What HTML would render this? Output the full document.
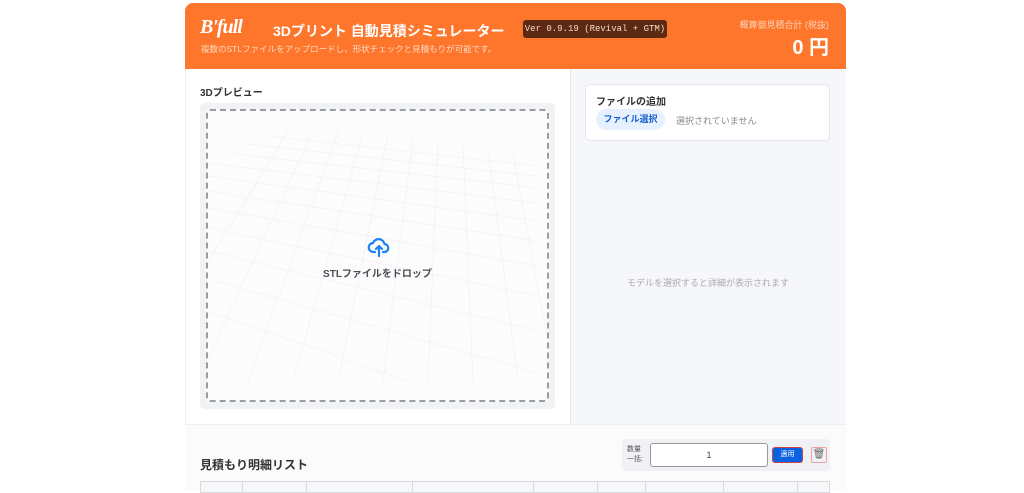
<!DOCTYPE html>
<html><head><meta charset="utf-8"><style>
*{margin:0;padding:0;box-sizing:border-box}
body{width:1024px;height:490px;background:#fff;font-family:"Liberation Sans","Noto Sans CJK JP",sans-serif;position:relative;overflow:hidden}
.hdr{position:absolute;left:185px;top:3px;width:661px;height:66px;background:#fe762c;border-radius:8px 8px 0 0;color:#fff}
.abs{position:absolute;white-space:nowrap}
</style></head><body>
<div class="hdr">
  <div class="abs" style="left:15px;top:13px;font-size:20px;font-weight:bold;font-style:italic;font-family:'Liberation Serif',serif;letter-spacing:-1px">B'full</div>
  <div class="abs" style="left:88px;top:18px;font-size:14px;font-weight:bold">3Dプリント 自動見積シミュレーター</div>
  <div class="abs" style="left:338px;top:17px;width:144px;height:18px;background:#5c2a12;border-radius:3px;font-family:'Liberation Mono',monospace;font-size:9px;line-height:18px;text-align:center;color:#f4d9c8">Ver 0.9.19 (Revival + GTM)</div>
  <div class="abs" style="left:16px;top:40px;font-size:8.5px;color:#ffd9c2">複数のSTLファイルをアップロードし、形状チェックと見積もりが可能です。</div>
  <div class="abs" style="right:17px;top:15px;font-size:9px;color:#ffd0b4">概算御見積合計 (税抜)</div>
  <div class="abs" style="right:17px;top:28px;font-size:20px;font-weight:bold">0 円</div>
</div>
<div class="abs" style="left:185px;top:69px;width:385px;height:355px;background:#fff;border-left:1px solid #eee"></div>
<div class="abs" style="left:570px;top:69px;width:276px;height:355px;background:#f6f7fb;border-left:1px solid #e8e8ec"></div>
<div class="abs" style="left:200px;top:84px;font-size:10px;font-weight:bold;color:#333">3Dプレビュー</div>
<div class="abs" style="left:200px;top:103px;width:355px;height:306px;background:#f1f2f4;border-radius:5px"></div>
<div class="abs" style="left:206px;top:109px;width:343px;height:293px;background:#fcfcfd;border:2px dashed #9a9ca3;border-radius:4px;overflow:hidden">
<svg width="343" height="293" style="position:absolute;left:0;top:0" stroke="#eeeff3" stroke-width="0.6" fill="none">
<g>
<line x1="60" y1="25" x2="330" y2="55"/><line x1="40" y1="33" x2="330" y2="65"/><line x1="20" y1="42" x2="330" y2="77"/><line x1="0" y1="52" x2="330" y2="92"/>
<line x1="0" y1="65" x2="330" y2="110"/><line x1="0" y1="80" x2="330" y2="130"/><line x1="0" y1="97" x2="330" y2="155"/>
<line x1="0" y1="117" x2="330" y2="185"/><line x1="0" y1="140" x2="330" y2="220"/><line x1="0" y1="168" x2="330" y2="262"/>
<line x1="0" y1="200" x2="200" y2="270"/>
<line x1="80" y1="20" x2="-30" y2="200"/><line x1="105" y1="20" x2="-10" y2="270"/><line x1="130" y1="21" x2="40" y2="270"/><line x1="155" y1="22" x2="85" y2="270"/>
<line x1="180" y1="24" x2="130" y2="270"/><line x1="205" y1="27" x2="175" y2="270"/><line x1="230" y1="30" x2="220" y2="270"/>
<line x1="255" y1="34" x2="265" y2="270"/><line x1="280" y1="38" x2="310" y2="270"/><line x1="305" y1="44" x2="340" y2="230"/>
</g></svg>
<svg width="24" height="24" viewBox="0 0 24 24" style="position:absolute;left:159px;top:124px" fill="none" stroke="#1a82f2" stroke-width="2.2" stroke-linecap="round" stroke-linejoin="round"><path d="M8 17H6.5A4.5 4.5 0 0 1 6 8a6 6 0 0 1 11.5 1A4 4 0 0 1 17 17h-1"/><path d="M12 21v-9M9 14l3-3 3 3"/></svg>
<div class="abs" style="left:0;width:339px;top:154px;text-align:center;font-size:10px;font-weight:bold;color:#4a4d55">STLファイルをドロップ</div>
</div>
<div class="abs" style="left:585px;top:84px;width:245px;height:57px;background:#fff;border:1px solid #e4e6ec;border-radius:5px"></div>
<div class="abs" style="left:596px;top:93px;font-size:10px;font-weight:bold;color:#333">ファイルの追加</div>
<div class="abs" style="left:596px;top:109px;width:69px;height:21px;background:#e6f0ff;border-radius:11px;font-size:9px;font-weight:bold;color:#1a5fd0;line-height:21px;text-align:center">ファイル選択</div>
<div class="abs" style="left:676px;top:114px;font-size:9px;color:#888">選択されていません</div>
<div class="abs" style="left:570px;width:276px;top:276px;text-align:center;font-size:9px;color:#aaa">モデルを選択すると詳細が表示されます</div>
<div class="abs" style="left:185px;top:424px;width:661px;height:66px;background:#fbfbfc;border-top:1px solid #eceef2"></div>
<div class="abs" style="left:200px;top:456px;font-size:12px;font-weight:bold;color:#333">見積もり明細リスト</div>
<div class="abs" style="left:622px;top:439px;width:208px;height:32px;background:#f0f1f4;border-radius:4px"></div>
<div class="abs" style="left:627px;top:445px;font-size:7px;line-height:10px;color:#555">数量<br>一括:</div>
<div class="abs" style="left:650px;top:443px;width:118px;height:24px;background:#fff;border:1px solid #999;border-radius:3px;font-size:9px;color:#444;text-align:center;line-height:22px">1</div>
<div class="abs" style="left:772px;top:447px;width:31px;height:16px;background:#0b62e0;border:1px solid #c44;border-radius:3px;font-size:7px;color:#fff;text-align:center;line-height:14px">適用</div>
<div class="abs" style="left:811px;top:447px;width:16px;height:16px;border:1px solid #f0a0a0;border-radius:2px;font-size:10px;color:#666;text-align:center;line-height:14px">🗑</div>
<div class="abs" style="left:200px;top:481px;width:630px;height:12px;background:#f6f7f9;border:1px solid #d8dade"></div>
<div class="abs" style="left:242px;top:481px;width:1px;height:12px;background:#d8dade"></div>
<div class="abs" style="left:306px;top:481px;width:1px;height:12px;background:#d8dade"></div>
<div class="abs" style="left:412px;top:481px;width:1px;height:12px;background:#d8dade"></div>
<div class="abs" style="left:533px;top:481px;width:1px;height:12px;background:#d8dade"></div>
<div class="abs" style="left:597px;top:481px;width:1px;height:12px;background:#d8dade"></div>
<div class="abs" style="left:645px;top:481px;width:1px;height:12px;background:#d8dade"></div>
<div class="abs" style="left:723px;top:481px;width:1px;height:12px;background:#d8dade"></div>
<div class="abs" style="left:797px;top:481px;width:1px;height:12px;background:#d8dade"></div>
</body></html>
